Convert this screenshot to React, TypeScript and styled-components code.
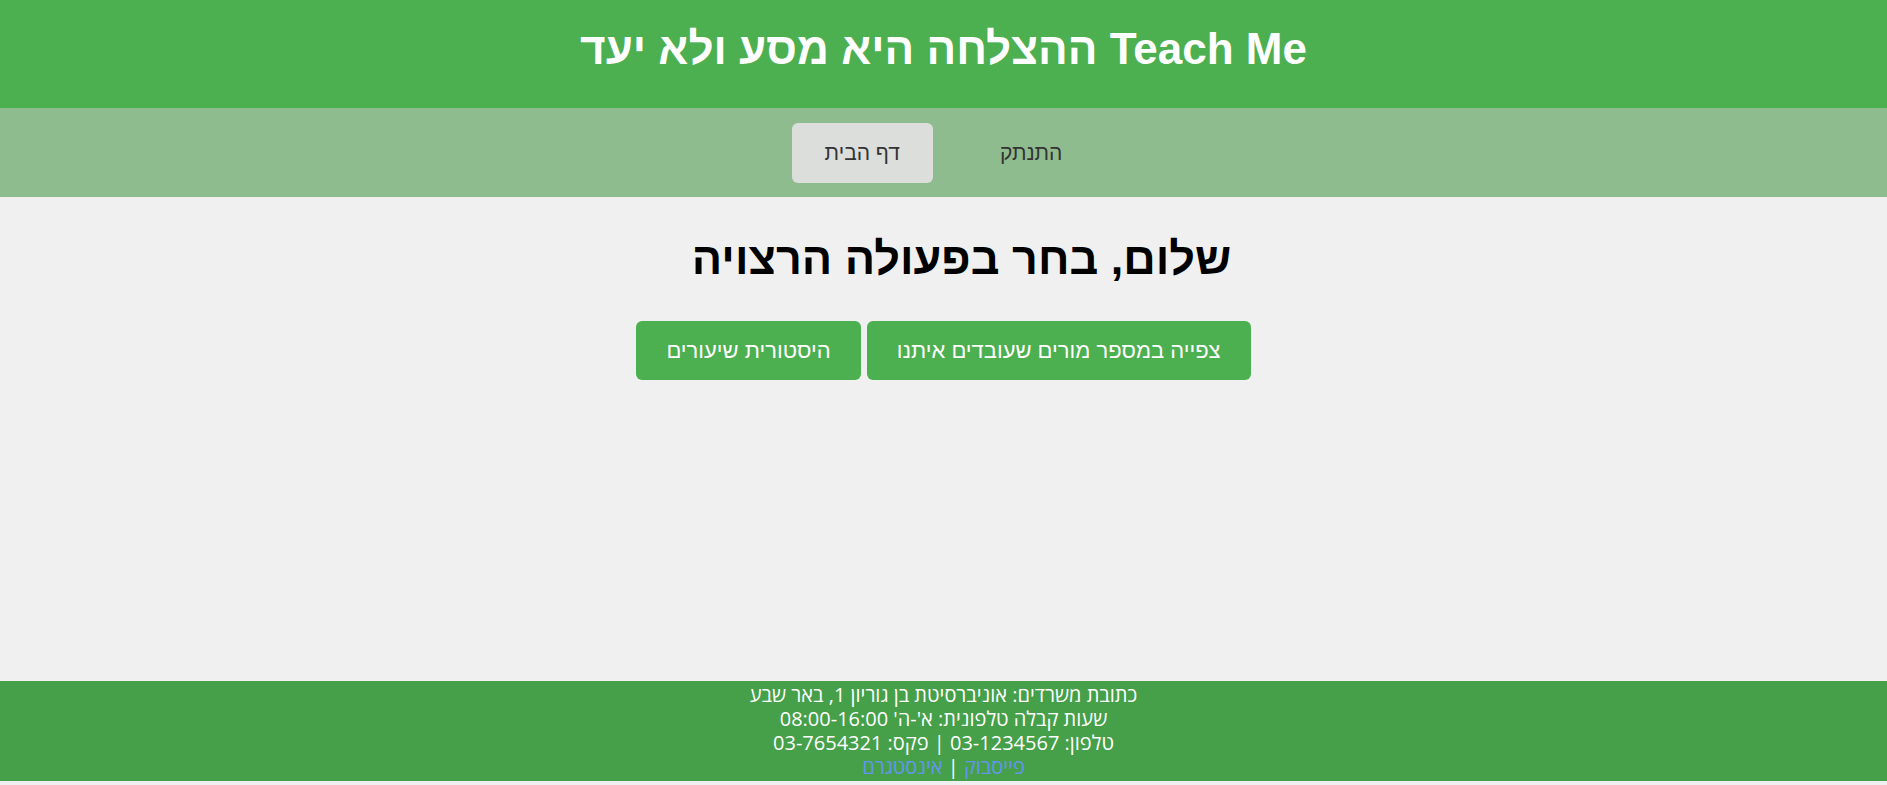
import React from "react";
import styled, { createGlobalStyle } from "styled-components";

const GlobalStyle = createGlobalStyle`
  html, body {
    margin: 0;
    padding: 0;
    background: #f0f0f0;
    font-family: "Liberation Sans", Arial, sans-serif;
  }
  * { box-sizing: border-box; }
`;

const Page = styled.div`
  direction: rtl;
  min-height: 100vh;
  padding-bottom: 4px;
  display: flex;
  flex-direction: column;
`;

const Header = styled.header`
  background: #4caf50;
  height: 108px;
  display: flex;
  align-items: center;
  justify-content: center;
  padding-bottom: 10px;
`;

const Title = styled.h1`
  margin: 0;
  color: #fff;
  font-size: 44px;
  font-weight: bold;
`;

const Nav = styled.nav`
  background: #8fbc8f;
  height: 89px;
  display: flex;
  align-items: center;
  justify-content: center;
  gap: 34px;
`;

const NavItem = styled.a<{ $active?: boolean }>`
  display: inline-block;
  padding: 18px 33px;
  border-radius: 6px;
  font-size: 21px;
  line-height: 24px;
  color: #333;
  text-decoration: none;
  background: ${(p) => (p.$active ? "#dcdedc" : "transparent")};
  cursor: pointer;
`;

const Main = styled.main`
  flex: 1;
  display: flex;
  flex-direction: column;
  align-items: center;
  padding-top: 36px;
`;

const Greeting = styled.h2`
  margin: 0 0 36px;
  padding-left: 36px;
  font-size: 45px;
  line-height: 52px;
  font-weight: bold;
  color: #000;
`;

const Actions = styled.div`
  display: flex;
  gap: 6px;
`;

const ActionButton = styled.button`
  background: #4caf50;
  color: #fff;
  border: none;
  border-radius: 6px;
  padding: 0 30px;
  height: 59px;
  font-family: "Liberation Sans", Arial, sans-serif;
  font-size: 22px;
  cursor: pointer;
`;

const Footer = styled.footer`
  background: #45a049;
  color: #fff;
  text-align: center;
  padding: 2px 0;
  font-family: "Open Sans", "Liberation Sans", sans-serif;
  font-size: 20px;
  font-weight: 500;
  line-height: 24px;
`;

const FooterLine = styled.div``;

const FooterLink = styled.a`
  color: #6495ed;
  text-decoration: none;
`;

export default function App() {
  return (
    <>
      <GlobalStyle />
      <Page>
        <Header>
          <Title>Teach Me ההצלחה היא מסע ולא יעד</Title>
        </Header>
        <Nav>
          <NavItem>התנתק</NavItem>
          <NavItem $active>דף הבית</NavItem>
        </Nav>
        <Main>
          <Greeting>שלום, בחר בפעולה הרצויה</Greeting>
          <Actions>
            <ActionButton>צפייה במספר מורים שעובדים איתנו</ActionButton>
            <ActionButton>היסטורית שיעורים</ActionButton>
          </Actions>
        </Main>
        <Footer>
          <FooterLine>כתובת משרדים: אוניברסיטת בן גוריון 1, באר שבע</FooterLine>
          <FooterLine>שעות קבלה טלפונית: א'-ה' 08:00-16:00</FooterLine>
          <FooterLine>טלפון: 03-1234567 | פקס: 03-7654321</FooterLine>
          <FooterLine>
            <FooterLink href="#">פייסבוק</FooterLink> | <FooterLink href="#">אינסטגרם</FooterLink>
          </FooterLine>
        </Footer>
      </Page>
    </>
  );
}
